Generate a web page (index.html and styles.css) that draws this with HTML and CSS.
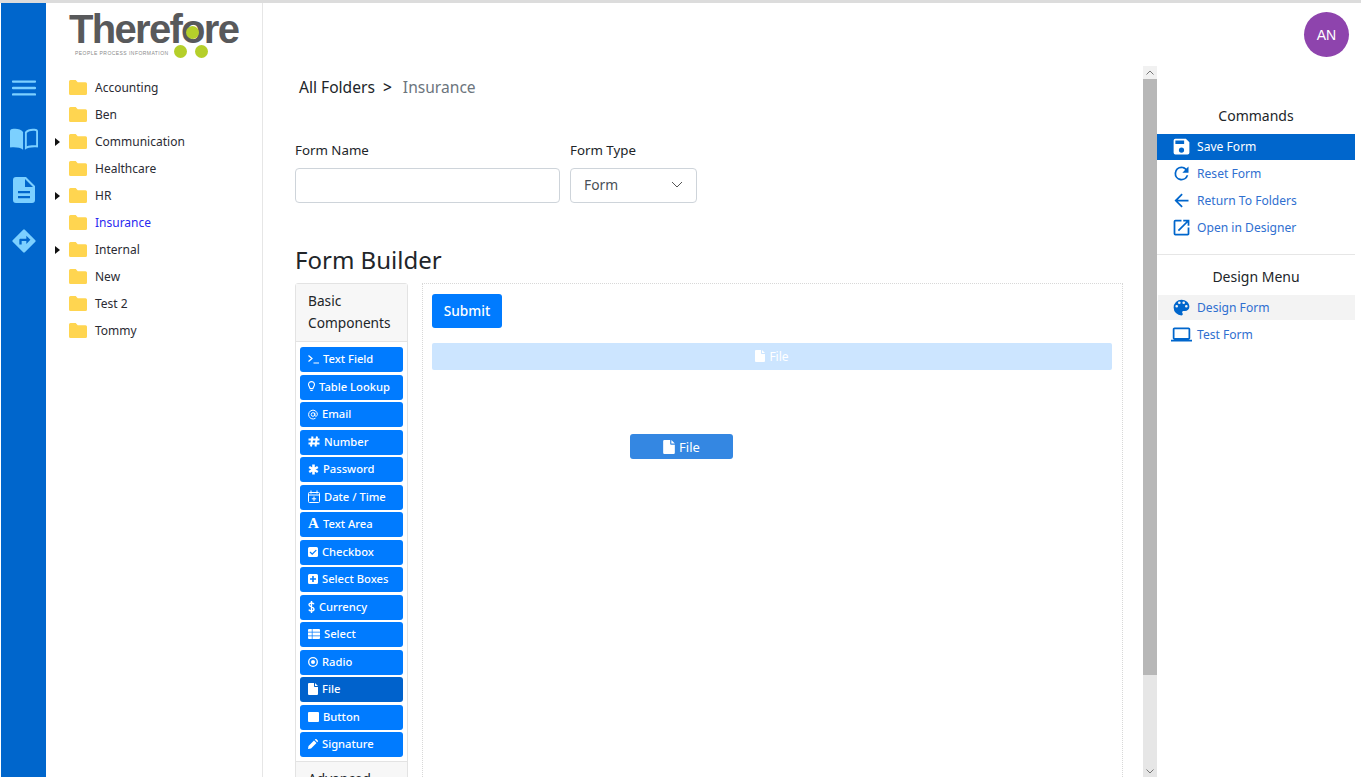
FILE: index.html
```html
<!DOCTYPE html>
<html lang="en">
<head>
    <meta charset="UTF-8">
    <title>Form Builder - Therefore</title>
    <link rel="stylesheet" href="styles.css">
</head>
<body>
    <svg class="defs" width="0" height="0">
        <symbol id="folder" viewBox="0 0 18 15"><path d="M1.5 0h5.2l2 2.2h7.8a1.5 1.5 0 0 1 1.500 1.500v9.800a1.500 1.500 0 0 1-1.500 1.500h-15a1.500 1.500 0 0 1-1.500-1.500v-12a1.500 1.500 0 0 1 1.500-1.500z"/></symbol>
    </svg>

    <nav class="rail">
        <svg class="rail-menu" width="24" height="18" viewBox="0 0 26 18"><path d="M1 2h24M1 9h24M1 16h24" stroke="currentColor" stroke-width="2.500" stroke-linecap="round"/></svg>
        <svg class="rail-book" width="28" height="24" viewBox="0 0 30 24"><path fill="currentColor" d="M14 4.500v19c-3-2.300-7.500-3-13.500-2.500-.3 0-.5-.2-.5-.5V4c0-1.500.8-2.300 2.200-2.600C7 .5 11.500 1.500 14 4.500zM16 4.500c2.500-3 7-4 11.800-3.100 1.400.3 2.200 1.100 2.200 2.600v16.500c0 .3-.2.5-.5.5-6-.5-10.500.2-13.500 2.500zm2 1v14.300c2.500-1 5.700-1.300 10-1.100V4c0-.5-.2-.6-.6-.7-4-.6-7.400.2-9.400 2.200z"/></svg>
        <svg class="rail-doc" width="22" height="26" viewBox="0 0 22 26"><path fill="currentColor" fill-rule="evenodd" d="M3 0h10l9 9v14a3 3 0 0 1-3 3H3a3 3 0 0 1-3-3V3a3 3 0 0 1 3-3zm9 2v8h8zM5 14v2.200h12V14zm0 5v2.200h12V19z"/></svg>
        <svg class="rail-dir" width="28" height="28" viewBox="0 0 24 24"><path fill="currentColor" d="M21.710 11.290l-9-9a1 1 0 0 0-1.420 0l-9 9a1 1 0 0 0 0 1.420l9 9a1 1 0 0 0 1.420 0l9-9a1 1 0 0 0 0-1.420zM14 14.500V12h-4v3H8v-4c0-.55.45-1 1-1h5V7.500l3.500 3.500-3.500 3.500z"/></svg>
    </nav>

    <aside class="tree">
        <div class="logo">
            <div class="logo-word">Therefore<span class="logo-eye"></span></div>
            <div class="logo-tag">
                <span>PEOPLE PROCESS INFORMATION</span>
                <i class="logo-dot"></i>
                <i class="logo-dot"></i>
            </div>
        </div>
        <ul class="tree-list">
            <li><span class="caret"></span><svg class="folder"><use href="#folder"/></svg>Accounting</li>
            <li><span class="caret"></span><svg class="folder"><use href="#folder"/></svg>Ben</li>
            <li><span class="caret closed"></span><svg class="folder"><use href="#folder"/></svg>Communication</li>
            <li><span class="caret"></span><svg class="folder"><use href="#folder"/></svg>Healthcare</li>
            <li><span class="caret closed"></span><svg class="folder"><use href="#folder"/></svg>HR</li>
            <li class="active"><span class="caret"></span><svg class="folder"><use href="#folder"/></svg>Insurance</li>
            <li><span class="caret closed"></span><svg class="folder"><use href="#folder"/></svg>Internal</li>
            <li><span class="caret"></span><svg class="folder"><use href="#folder"/></svg>New</li>
            <li><span class="caret"></span><svg class="folder"><use href="#folder"/></svg>Test 2</li>
            <li><span class="caret"></span><svg class="folder"><use href="#folder"/></svg>Tommy</li>
        </ul>
    </aside>

    <main class="main">
        <div class="scroll-area">
            <div class="breadcrumb">
                <span>All Folders</span><b>&gt;</b><span class="crumb-current">Insurance</span>
            </div>

            <div class="form-head">
                <div class="field field-name">
                    <label>Form Name</label>
                    <div class="input"></div>
                </div>
                <div class="field field-type">
                    <label>Form Type</label>
                    <div class="input select">
                        Form
                        <svg width="12" height="7" viewBox="0 0 12 7"><path d="M1 1l5 5 5-5" fill="none" stroke="#555" stroke-width="1"/></svg>
                    </div>
                </div>
            </div>

            <h2 class="builder-title">Form Builder</h2>

            <div class="builder">
                <div class="palette">
                    <div class="palette-head">Basic Components</div>
                    <div class="palette-body">
                        <a class="comp"><svg width="11" height="10" viewBox="0 0 11 10"><path d="M.5 1.500L4 4.500.5 7.500M5.500 9H11" fill="none" stroke="#fff" stroke-width="1.200"/></svg>Text Field</a>
                        <a class="comp"><svg width="7" height="11" viewBox="0 0 7 11"><path d="M3.500.6a3 3 0 0 0-3 3c0 1.500 1.300 2.300 1.600 4h2.800c.3-1.700 1.600-2.500 1.600-4a3 3 0 0 0-3-3zM2.300 9.500h2.400" fill="none" stroke="#fff" stroke-width="1.100"/></svg>Table Lookup</a>
                        <a class="comp"><svg width="10" height="11" viewBox="0 0 10 11"><circle cx="5" cy="5.500" r="1.800" fill="none" stroke="#fff"/><path d="M6.800 3.700v2.600c0 1.300 2.600 1.300 2.600-.8A4.400 4.400 0 1 0 7.500 9.200" fill="none" stroke="#fff"/></svg>Email</a>
                        <a class="comp"><svg width="12" height="11" viewBox="0 0 12 11"><path d="M4.500.5L3 10.500M9 .5L7.500 10.500M.5 3.500h11M.5 7.500h11" fill="none" stroke="#fff" stroke-width="2"/></svg>Number</a>
                        <a class="comp"><svg width="11" height="11" viewBox="0 0 11 11"><path d="M5.500.5v10M1.200 3l8.600 5M9.800 3l-8.600 5" fill="none" stroke="#fff" stroke-width="2.600"/></svg>Password</a>
                        <a class="comp"><svg width="12" height="13" viewBox="0 0 12 13"><path d="M1.500 2.500h9a1 1 0 0 1 1 1v8a1 1 0 0 1-1 1h-9a1 1 0 0 1-1-1v-8a1 1 0 0 1 1-1zM.5 5h11M3 .5v3M9 .5v3M6 6.500v4.500M3.800 8.800h4.400" fill="none" stroke="#fff"/></svg>Date / Time</a>
                        <a class="comp comp-serif"><span class="comp-glyph">A</span>Text Area</a>
                        <a class="comp"><svg width="10" height="10" viewBox="0 0 10 10"><path fill="#fff" fill-rule="evenodd" d="M1.500 0h7A1.500 1.500 0 0 1 10 1.500v7A1.500 1.500 0 0 1 8.500 10h-7A1.500 1.500 0 0 1 0 8.500v-7A1.500 1.500 0 0 1 1.500 0zm6.300 2.700L4.200 6.200 2.500 4.600l-.9.900 2.600 2.500 4.500-4.400z"/></svg>Checkbox</a>
                        <a class="comp"><svg width="10" height="10" viewBox="0 0 10 10"><path fill="#fff" fill-rule="evenodd" d="M1.500 0h7A1.500 1.500 0 0 1 10 1.500v7A1.500 1.500 0 0 1 8.500 10h-7A1.500 1.500 0 0 1 0 8.500v-7A1.500 1.500 0 0 1 1.500 0zM4.200 2v2.200H2v1.600h2.200V8h1.600V5.800H8V4.200H5.800V2z"/></svg>Select Boxes</a>
                        <a class="comp"><svg width="7" height="12" viewBox="0 0 7 12"><path d="M6 3.200C5.600 2.300 4.700 2 3.500 2 2 2 1 2.700 1 3.800c0 2.500 5 1.600 5 4.300 0 1.200-1.100 1.900-2.500 1.900-1.300 0-2.200-.4-2.700-1.400M3.500 0v12" fill="none" stroke="#fff" stroke-width="1.400"/></svg>Currency</a>
                        <a class="comp"><svg width="12" height="10" viewBox="0 0 12 10"><path fill="#fff" d="M1 0h2.800v2.800H0V1a1 1 0 0 1 1-1zM4.500 0H11a1 1 0 0 1 1 1v1.800H4.500zM0 3.600h3.800v2.800H0zM4.500 3.600H12v2.800H4.500zM0 7.200h3.800V10H1a1 1 0 0 1-1-1zM4.500 7.200H12V9a1 1 0 0 1-1 1H4.500z"/></svg>Select</a>
                        <a class="comp"><svg width="10" height="10" viewBox="0 0 10 10"><circle cx="5" cy="5" r="4.300" fill="none" stroke="#fff" stroke-width="1.300"/><circle cx="5" cy="5" r="2" fill="#fff"/></svg>Radio</a>
                        <a class="comp pressed"><svg width="10" height="12" viewBox="0 0 10 12"><path fill="#fff" d="M1 0h5v3.200c0 .5.300.8.800.8H10v7a1 1 0 0 1-1 1H1a1 1 0 0 1-1-1V1a1 1 0 0 1 1-1zM7 0l3 3H7z"/></svg>File</a>
                        <a class="comp"><svg width="11" height="10" viewBox="0 0 11 10"><rect width="11" height="10" rx="1" fill="#fff"/></svg>Button</a>
                        <a class="comp"><svg width="10" height="10" viewBox="0 0 10 10"><path fill="#fff" d="M0 10l.5-3L6 1.500 8.500 4 3 9.500zM6.800.7l.4-.4a1 1 0 0 1 1.400 0l1.100 1.100a1 1 0 0 1 0 1.400l-.4.400z"/></svg>Signature</a>
                    </div>
                    <div class="palette-head palette-next">Advanced</div>
                </div>

                <div class="canvas">
                    <button class="submit">Submit</button>
                    <div class="drop-bar">
                        <svg width="10" height="12" viewBox="0 0 10 12"><path fill="#fff" d="M1 0h5v3.200c0 .5.300.8.800.8H10v7a1 1 0 0 1-1 1H1a1 1 0 0 1-1-1V1a1 1 0 0 1 1-1zM7 0l3 3H7z"/></svg>
                        File
                    </div>
                </div>
            </div>

            <div class="drag-ghost">
                <svg width="12" height="14" viewBox="0 0 10 12"><path fill="#fff" d="M1 0h5v3.200c0 .5.300.8.800.8H10v7a1 1 0 0 1-1 1H1a1 1 0 0 1-1-1V1a1 1 0 0 1 1-1zM7 0l3 3H7z"/></svg>
                File
            </div>
        </div>

        <div class="scrollbar">
            <div class="scroll-btn">
                <svg width="8" height="5" viewBox="0 0 8 5"><path d="M.5 4.500L4 1l3.500 3.500" fill="none" stroke="#777"/></svg>
            </div>
            <div class="scroll-thumb"></div>
            <div class="scroll-track">
                <svg width="8" height="5" viewBox="0 0 8 5"><path d="M.5.500L4 4 7.500.500" fill="none" stroke="#777"/></svg>
            </div>
        </div>
    </main>

    <aside class="side">
        <div class="avatar">AN</div>

        <h4 class="side-title">Commands</h4>
        <a class="side-item selected"><svg viewBox="0 0 24 24"><path d="M17 3H5a2 2 0 0 0-2 2v14a2 2 0 0 0 2 2h14a2 2 0 0 0 2-2V7l-4-4zm-5 16a3 3 0 1 1 0-6 3 3 0 0 1 0 6zm3-10H5V5h10v4z"/></svg>Save Form</a>
        <a class="side-item"><svg viewBox="0 0 24 24"><path d="M17.650 6.350A7.960 7.960 0 0 0 12 4a8 8 0 1 0 7.750 10h-2.080A6 6 0 1 1 12 6c1.660 0 3.140.69 4.220 1.780L13 11h7V4l-2.350 2.350z"/></svg>Reset Form</a>
        <a class="side-item"><svg viewBox="0 0 24 24"><path d="M20 11H7.830l5.590-5.590L12 4l-8 8 8 8 1.410-1.410L7.830 13H20v-2z"/></svg>Return To Folders</a>
        <a class="side-item"><svg viewBox="0 0 24 24"><path d="M19 19H5V5h7V3H5a2 2 0 0 0-2 2v14a2 2 0 0 0 2 2h14c1.100 0 2-.9 2-2v-7h-2v7zM14 3v2h3.590l-9.830 9.830 1.410 1.410L19 6.410V10h2V3h-7z"/></svg>Open in Designer</a>

        <hr class="side-rule">

        <h4 class="side-title">Design Menu</h4>
        <a class="side-item hovered"><svg viewBox="0 0 24 24"><path d="M12 3a9 9 0 0 0 0 18c.83 0 1.500-.67 1.500-1.500 0-.39-.15-.74-.39-1.010-.23-.26-.38-.61-.38-.99 0-.83.67-1.500 1.500-1.500H16c2.760 0 5-2.240 5-5 0-4.420-4.030-8-9-8zm-5.500 9a1.500 1.500 0 1 1 0-3 1.500 1.500 0 0 1 0 3zm3-4a1.500 1.500 0 1 1 0-3 1.500 1.500 0 0 1 0 3zm5 0a1.500 1.500 0 1 1 0-3 1.500 1.500 0 0 1 0 3zm3 4a1.500 1.500 0 1 1 0-3 1.500 1.500 0 0 1 0 3z"/></svg>Design Form</a>
        <a class="side-item"><svg viewBox="0 0 24 24"><path d="M20 18c1.100 0 2-.9 2-2V6c0-1.100-.9-2-2-2H4c-1.100 0-2 .9-2 2v10c0 1.100.9 2 2 2H0v2h24v-2h-4zM4 6h16v10H4V6z"/></svg>Test Form</a>
    </aside>
</body>
</html>
```

FILE: styles.css
```css
* {
    margin: 0;
    padding: 0;
    box-sizing: border-box;
}

html, body {
    height: 777px;
    overflow: hidden;
}

body {
    font-family: "Noto Sans", "Open Sans", sans-serif;
    font-size: 12px;
    color: #212529;
    background: white;
    display: flex;
    border-top: 3px solid #dcdcdc;
    padding-left: 1px;
}

.defs {
    position: absolute;
}

/* left rail */
.rail {
    width: 45px;
    flex-shrink: 0;
    background: #0066cc;
    color: #7cd0ff;
    display: flex;
    flex-direction: column;
    align-items: center;
}

.rail-menu {
    margin-top: 76px;
}

.rail-book {
    margin-top: 30px;
}

.rail-doc {
    margin-top: 26px;
}

.rail-dir {
    margin-top: 24px;
}

/* folder tree */
.tree {
    width: 217px;
    flex-shrink: 0;
    border-right: 1px solid #e6e6e6;
}

.logo {
    height: 65px;
    padding: 11px 0 0 23px;
}

.logo-word {
    position: relative;
    width: 172px;
    font-family: "Liberation Sans", sans-serif;
    font-size: 40px;
    font-weight: bold;
    line-height: 31px;
    letter-spacing: -1.700px;
    color: #58595b;
}

.logo-eye {
    position: absolute;
    left: 117px;
    top: 12px;
    width: 13px;
    height: 13px;
    border-radius: 50%;
    background: #b5cf2a;
}

.logo-tag {
    display: flex;
    align-items: center;
    gap: 8px;
    height: 12px;
    padding-left: 6px;
    font-family: "Liberation Sans", sans-serif;
    font-size: 5px;
    color: #8a8a8a;
}

.logo-tag span {
    width: 91px;
    margin-top: 3px;
    white-space: nowrap;
    letter-spacing: 0.450px;
}

.logo-dot {
    width: 13px;
    height: 13px;
    border-radius: 50%;
    background: #b5cf2a;
}

.tree-list {
    list-style: none;
    padding-top: 6px;
}

.tree-list li {
    height: 27px;
    display: flex;
    align-items: center;
    padding-left: 9px;
    color: #2b2b33;
}

.tree-list li.active {
    color: #2a2af0;
}

.caret {
    width: 14px;
    display: block;
}

.caret.closed {
    width: 0;
    height: 0;
    margin-right: 9px;
    border-left: 5px solid #111;
    border-top: 4px solid transparent;
    border-bottom: 4px solid transparent;
}

.folder {
    width: 18px;
    height: 15px;
    margin-right: 8px;
    fill: #ffd550;
}

/* main column */
.main {
    width: 894px;
    flex-shrink: 0;
    padding-top: 63px;
    display: flex;
}

.scroll-area {
    position: relative;
    width: 880px;
    height: 711px;
    overflow: hidden;
    padding: 9px 0 0 32px;
}

.breadcrumb {
    display: flex;
    align-items: center;
    height: 24px;
    padding-left: 4px;
    font-size: 15.600px;
}

.breadcrumb b {
    margin: 0 11px 0 8px;
    font-weight: 500;
}

.crumb-current {
    color: #6c757d;
}

.form-head {
    display: flex;
    gap: 10px;
    margin-top: 41px;
}

.field label {
    display: block;
    font-size: 13.300px;
    line-height: 20px;
    margin-bottom: 8px;
}

.field-name {
    width: 265px;
}

.field-type {
    width: 127px;
}

.input {
    height: 35px;
    border: 1px solid #ced4da;
    border-radius: 4px;
    background: white;
}

.select {
    display: flex;
    align-items: center;
    justify-content: space-between;
    padding: 0 13px 2px;
    font-size: 13.800px;
    color: #495057;
}

.builder-title {
    font-size: 24px;
    font-weight: 400;
    line-height: 30px;
    margin-top: 42px;
}

.builder {
    display: flex;
    margin-top: 8px;
    width: 828px;
    height: 600px;
}

/* component palette */
.palette {
    width: 113px;
    flex-shrink: 0;
    border: 1px solid #e3e3e3;
    border-radius: 3px 3px 0 0;
}

.palette-head {
    background: #f7f7f7;
    padding: 6px 12px;
    height: 58px;
    font-size: 13.700px;
    line-height: 22px;
    border-bottom: 1px solid #e3e3e3;
}

.palette-next {
    border-top: 1px solid #e3e3e3;
    border-bottom: none;
}

.palette-body {
    padding: 5px 4px 1.500px;
}

.comp {
    display: flex;
    align-items: center;
    gap: 4px;
    height: 25px;
    margin-bottom: 2.500px;
    padding: 0 0 2px 8px;
    border-radius: 3px;
    background: #007bff;
    color: white;
    font-size: 11.200px;
    font-weight: 500;
}

.comp svg {
    margin-top: 1px;
}

.comp.pressed {
    background: #0062cc;
}

.comp-glyph {
    width: 11px;
    font-family: "Liberation Serif", serif;
    font-size: 15px;
    font-weight: bold;
}

/* drop canvas */
.canvas {
    flex: 1;
    margin-left: 14px;
    border: 1px dotted #d8d8d8;
    padding: 10px 10px 10px 9px;
}

.submit {
    display: block;
    width: 70px;
    height: 34px;
    padding-bottom: 1px;
    border: none;
    border-radius: 3px;
    background: #007bff;
    color: white;
    font-family: inherit;
    font-size: 13.700px;
    font-weight: 500;
}

.drop-bar {
    display: flex;
    align-items: center;
    justify-content: center;
    gap: 4px;
    height: 27px;
    margin-top: 15px;
    padding-bottom: 1px;
    border-radius: 2px;
    background: #cce5ff;
    color: white;
    font-size: 12px;
}

.drag-ghost {
    position: absolute;
    left: 367px;
    top: 368px;
    width: 103px;
    height: 25px;
    display: flex;
    align-items: center;
    justify-content: center;
    gap: 4px;
    border-radius: 3px;
    background: #3487e2;
    color: white;
    font-size: 13px;
}

/* scrollbar */
.scrollbar {
    width: 14px;
    height: 711px;
    display: flex;
    flex-direction: column;
    background: #e6e6e6;
}

.scroll-btn {
    height: 13px;
    display: flex;
    align-items: center;
    justify-content: center;
    background: #f1f1f1;
}

.scroll-thumb {
    height: 596px;
    background: #b7b7b7;
}

.scroll-track {
    flex: 1;
    display: flex;
    align-items: flex-end;
    justify-content: center;
    padding-bottom: 3px;
}

/* right panel */
.side {
    width: 198px;
    flex-shrink: 0;
    position: relative;
    padding-top: 102px;
}

.avatar {
    position: absolute;
    left: 147px;
    top: 9px;
    width: 45px;
    height: 45px;
    border-radius: 50%;
    background: #8e44ad;
    color: white;
    font-family: "Liberation Sans", sans-serif;
    font-size: 14px;
    display: flex;
    align-items: center;
    justify-content: center;
}

.side-title {
    height: 29px;
    font-size: 14px;
    font-weight: 400;
    line-height: 22px;
    text-align: center;
    color: #212529;
}

.side-item {
    display: flex;
    align-items: center;
    gap: 5px;
    height: 27px;
    padding-left: 14px;
    color: #2f6fd0;
    font-size: 12.100px;
}

.side-item svg {
    width: 21px;
    height: 21px;
    fill: #0066cc;
}

.side-item.selected {
    height: 26px;
    padding-bottom: 1px;
    background: #0066cc;
    color: white;
}

.side-item.selected svg {
    fill: white;
}

.side-item.hovered {
    height: 25px;
    margin: 0 0 1px 1px;
    padding-left: 13px;
    background: #f3f3f3;
}

.side-rule {
    border: none;
    border-top: 1px solid #e6e6e6;
    margin: 13px 0 11px;
}
```
